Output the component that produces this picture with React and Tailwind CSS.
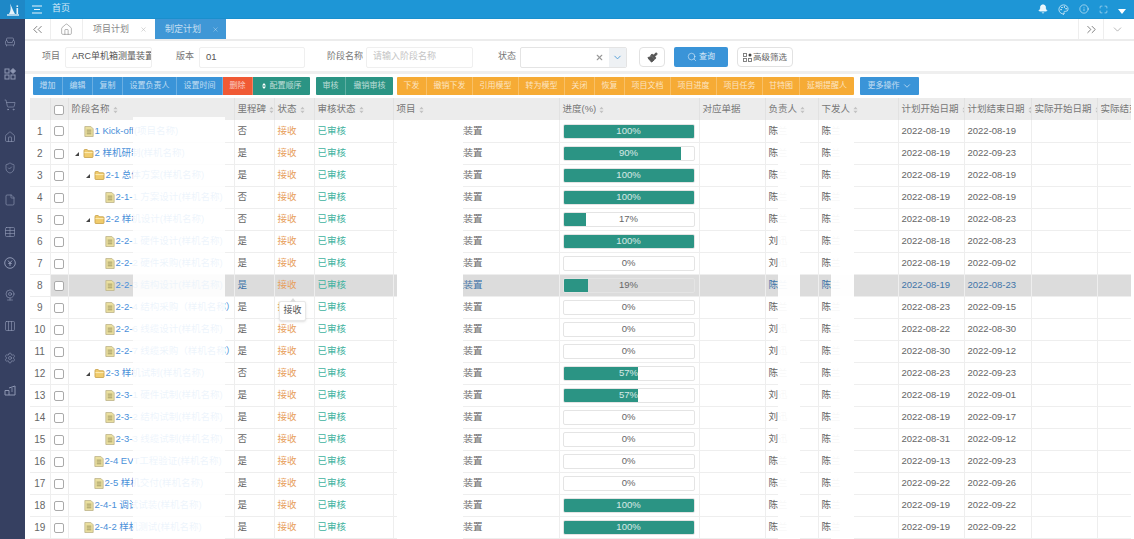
import React from "react";
import { ChevronsLeft, ChevronsRight, ChevronDown, Home, X, Search, Bell, Palette, Info, Maximize, Armchair, ShoppingCart, ShieldCheck, File, Table, Webcam, Columns3, Settings, Paintbrush } from "lucide-react";

const font = "font-['Liberation_Sans','Noto_Sans_CJK_SC',sans-serif]";

const rows = [
  { n: 1, lvl: "file", left: 12, name: "1 Kick-off(项目名称)", ms: "否", p: 100, o: "陈兰", i: "陈兰", s: "2022-08-19", e: "2022-08-19" },
  { n: 2, lvl: "folder", left: 3, name: "2 样机研制(样机名称)", ms: "是", p: 90, o: "陈兰", i: "陈兰", s: "2022-08-19", e: "2022-09-23" },
  { n: 3, lvl: "folder", left: 14, name: "2-1 总体方案(样机名称)", ms: "是", p: 100, o: "陈兰", i: "陈兰", s: "2022-08-19", e: "2022-08-19" },
  { n: 4, lvl: "file", left: 33, name: "2-1-1 方案设计(样机名称)", ms: "否", p: 100, o: "陈兰", i: "陈兰", s: "2022-08-19", e: "2022-08-19" },
  { n: 5, lvl: "folder", left: 14, name: "2-2 样机设计(样机名称)", ms: "否", p: 17, o: "陈兰", i: "陈兰", s: "2022-08-19", e: "2022-08-23" },
  { n: 6, lvl: "file", left: 33, name: "2-2-1 硬件设计(样机名称)", ms: "是", p: 100, o: "刘迅", i: "陈兰", s: "2022-08-18", e: "2022-08-23" },
  { n: 7, lvl: "file", left: 33, name: "2-2-2 硬件采购(样机名称)", ms: "是", p: 0, o: "刘迅", i: "陈兰", s: "2022-08-19", e: "2022-09-02" },
  { n: 8, lvl: "file", left: 33, name: "2-2-3 结构设计(样机名称)", ms: "是", p: 19, o: "陈兰", i: "陈兰", s: "2022-08-19", e: "2022-08-23", hi: true },
  { n: 9, lvl: "file", left: 33, name: "2-2-4 结构采购（样机名称）", ms: "是", p: 0, o: "陈兰", i: "陈兰", s: "2022-08-23", e: "2022-09-15" },
  { n: 10, lvl: "file", left: 33, name: "2-2-6 线缆设计(样机名称)", ms: "是", p: 0, o: "刘迅", i: "陈兰", s: "2022-08-22", e: "2022-08-30" },
  { n: 11, lvl: "file", left: 33, name: "2-2-7 线缆采购（样机名称）", ms: "是", p: 0, o: "刘迅", i: "陈兰", s: "2022-08-30", e: "2022-09-12" },
  { n: 12, lvl: "folder", left: 14, name: "2-3 样机试制(样机名称)", ms: "否", p: 57, o: "陈兰", i: "陈兰", s: "2022-08-23", e: "2022-09-23" },
  { n: 13, lvl: "file", left: 33, name: "2-3-1 硬件试制(样机名称)", ms: "是", p: 57, o: "刘迅", i: "陈兰", s: "2022-08-19", e: "2022-09-01" },
  { n: 14, lvl: "file", left: 33, name: "2-3-2 结构试制(样机名称)", ms: "是", p: 0, o: "刘迅", i: "陈兰", s: "2022-08-19", e: "2022-09-17" },
  { n: 15, lvl: "file", left: 33, name: "2-3-3 线缆试制(样机名称)", ms: "否", p: 0, o: "刘迅", i: "陈兰", s: "2022-08-31", e: "2022-09-12" },
  { n: 16, lvl: "file", left: 22, name: "2-4 EVT工程验证(样机名称)", ms: "是", p: 0, o: "陈兰", i: "陈兰", s: "2022-09-13", e: "2022-09-23" },
  { n: 17, lvl: "file", left: 22, name: "2-5 样机交付(样机名称)", ms: "是", p: 0, o: "陈兰", i: "陈兰", s: "2022-09-22", e: "2022-09-26" },
  { n: 18, lvl: "file", left: 12, name: "2-4-1 调试试装(样机名称)", ms: "是", p: 100, o: "陈兰", i: "陈兰", s: "2022-09-19", e: "2022-09-22" },
  { n: 19, lvl: "file", left: 12, name: "2-4-2 样机测试(样机名称)", ms: "是", p: 100, o: "陈兰", i: "陈兰", s: "2022-09-19", e: "2022-09-22" },
];

function Sort() {
  return (
    <svg width="5" height="8" viewBox="0 0 6 9" className="inline-block ml-[3px] shrink-0">
      <path d="M3 0.5 L5.5 3.6 H0.5 Z M3 8.5 L0.5 5.4 H5.5 Z" fill="#c2c2c2" />
    </svg>
  );
}

function FileIcon() {
  return (
    <svg width="10" height="11" viewBox="0 0 10 12" className="shrink-0">
      <path d="M0.5 0.5H7L9.5 3V11.5H0.5Z" fill="#eadf9f" stroke="#c2b98f" />
      <path d="M2.5 4.5H7.5M2.5 6.5H7.5M2.5 8.5H7.5" stroke="#8c8350" strokeWidth="0.8" />
    </svg>
  );
}

function FolderIcon() {
  return (
    <svg width="11" height="9" viewBox="0 0 11 10" className="shrink-0">
      <path d="M0.5 2V8.5Q0.5 9.5 1.5 9.5H9.5Q10.5 9.5 10.5 8.5V3Q10.5 2 9.5 2H5L4 0.5H1.5Q0.5 0.5 0.5 2Z" fill="#f0cb6c" stroke="#c9a550" />
      <path d="M1 4H10" stroke="#fff2c0" />
    </svg>
  );
}

function Btn({ w, bg, children }) {
  return (
    <div className={`${w} ${bg} h-full flex items-center justify-center text-[8px] text-white/70 border-r border-white/25 last:border-r-0 whitespace-nowrap`}>
      {children}
    </div>
  );
}

function Th({ children, sort = true }) {
  return (
    <th className="border-r border-[#e2e2e2] font-normal text-left px-[3px] pt-px overflow-hidden whitespace-nowrap text-[9.5px] text-[#777]">
      <span className="inline-flex items-center">
        {children}
        {sort && <Sort />}
      </span>
    </th>
  );
}

function Progress({ p, hi }) {
  return (
    <div className={`relative h-[15px] w-[132px] border border-[#e4e4e4] rounded-[2px] overflow-hidden ${hi ? "bg-[#dcdcdc]" : "bg-white"}`}>
      <div className="h-full bg-[#2b9484]" style={{ width: `${p}%` }} />
      <div className={`absolute inset-0 flex items-center justify-center text-[9.5px] ${p >= 50 ? "text-white/80" : "text-[#666]"}`}>{p}%</div>
    </div>
  );
}

export default function App() {
  const td = "border-r border-[#eeeeee] px-[3px] pt-px overflow-hidden whitespace-nowrap";
  const cols = ["w-[20px]", "w-[18px]", "w-[166px]", "w-[40px]", "w-[40px]", "w-[79px]", "w-[166px]", "w-[140px]", "w-[66px]", "w-[53px]", "w-[80px]", "w-[66px]", "w-[67px]", "w-[66px]", "w-[34px]"];
  return (
    <div className={`${font} w-[1134px] h-[539px] overflow-hidden flex bg-white text-[9.5px] text-[#666]`}>
      {/* sidebar */}
      <aside className="w-[25px] shrink-0 bg-[#364061] flex flex-col">
        <div className="w-full h-[19px] bg-[#1e88c7] flex items-center justify-center">
          <svg width="14" height="13" viewBox="0 0 14 13">
            <path d="M4 0.5C5 4 5 8 3 11H9C7 8 6 4 4 0.5Z" fill="#e6f2fb" />
            <path d="M1 12H13" stroke="#e6f2fb" strokeWidth="1.4" />
            <rect x="10.5" y="5" width="1.6" height="6" fill="#e6f2fb" />
            <rect x="10.5" y="2.4" width="1.6" height="1.6" fill="#e6f2fb" />
          </svg>
        </div>
        <div className="flex flex-col items-center w-[19px] gap-[19.6px] mt-[17px] text-[#8e97b3]">
          <Armchair size={12} strokeWidth={1.3} />
          <svg width="12" height="12" viewBox="0 0 12 12" fill="none" stroke="currentColor" strokeWidth="1">
            <rect x="1" y="1" width="4" height="4" /><rect x="1" y="7" width="4" height="4" /><rect x="7" y="7" width="4" height="4" />
            <path d="M9 0.5L11.5 3L9 5.5L6.5 3Z" fill="currentColor" />
          </svg>
          <ShoppingCart size={12} strokeWidth={1.3} />
          <Home size={12} strokeWidth={1.3} />
          <ShieldCheck size={12} strokeWidth={1.3} />
          <File size={12} strokeWidth={1.3} />
          <Table size={12} strokeWidth={1.3} />
          <svg width="12" height="12" viewBox="0 0 12 12" fill="none" stroke="currentColor" strokeWidth="1">
            <circle cx="6" cy="6" r="5.3" />
            <path d="M4 3.5L6 6L8 3.5M6 6V9M4.3 6.5H7.7" />
          </svg>
          <Webcam size={12} strokeWidth={1.3} />
          <Columns3 size={12} strokeWidth={1.3} />
          <Settings size={12} strokeWidth={1.3} />
          <svg width="12" height="12" viewBox="0 0 12 12" fill="none" stroke="currentColor" strokeWidth="1">
            <path d="M1 6.5H5V11H1ZM5 4L11 2V11H5" />
            <path d="M7 5H9M7 7H9" strokeWidth="0.8" />
          </svg>
        </div>
      </aside>

      <main className="flex-1 min-w-0 flex flex-col relative">
        {/* top bar */}
        <header className="h-[19px] shrink-0 bg-[#1e96d6] flex items-center pl-[7px] pr-[8px] text-white border-b border-[#1a8fcd]">
          <svg width="10" height="9" viewBox="0 0 10 9" className="mt-[1px]">
            <path d="M0 1H10M2 4.5H8M0 8H10" stroke="#e8f4fb" strokeWidth="1" />
          </svg>
          <span className="ml-[10px] text-[9px] text-white/80">首页</span>
          <div className="ml-auto flex items-center gap-[10px] text-white/90">
            <Bell size={10} strokeWidth={2} fill="currentColor" />
            <Palette size={11} strokeWidth={1.6} />
            <Info size={10} strokeWidth={1.4} />
            <Maximize size={9} strokeWidth={1.4} />
            <svg width="8" height="5" viewBox="0 0 8 5" className="mt-[4px]"><path d="M0 0H8L4 5Z" fill="#fff" /></svg>
          </div>
        </header>

        {/* tab bar */}
        <nav className="h-[22px] shrink-0 flex items-stretch border-b-2 border-[#ececec] text-[9px]">
          <div className="w-[26px] flex items-center justify-center border-r border-[#eee] text-[#666]"><ChevronsLeft size={15} strokeWidth={1.3} /></div>
          <div className="w-[32px] flex items-center justify-center border-r border-[#eee] text-[#777]"><Home size={13} strokeWidth={1} /></div>
          <div className="w-[72px] flex items-center pl-[10px] pt-px text-[#888]">项目计划<X size={7} className="ml-[11px] text-[#bbb]" /></div>
          <div className="w-[71px] flex items-center pl-[10px] pt-px bg-[#3f97d6] text-white/70">制定计划<X size={7} className="ml-[11px] text-white/50" /></div>
          <div className="ml-auto w-[26px] flex items-center justify-center border-x border-[#eee] text-[#666]"><ChevronsRight size={15} strokeWidth={1.3} /></div>
          <div className="w-[27px] mr-[3px] flex items-center justify-center text-[#888]"><ChevronDown size={13} strokeWidth={1.1} /></div>
        </nav>

        {/* form */}
        <section className="h-[33px] shrink-0 flex items-center pt-[2px] text-[9px] text-[#777] border-b-[3px] border-[#efefef]">
          <span className="ml-[17px] w-[18px] shrink-0">项目</span>
          <div className="ml-[5px] w-[87px] h-[21px] border border-[#efefef] rounded-[2px] pl-[6px] flex items-center text-[9px] text-[#555] overflow-hidden whitespace-nowrap">ARC单机箱测量装置</div>
          <span className="ml-[24px] w-[18px] shrink-0">版本</span>
          <div className="ml-[5px] w-[106px] h-[21px] border border-[#efefef] rounded-[2px] pl-[6px] flex items-center text-[9.5px] text-[#555]">01</div>
          <span className="ml-[22px] w-[36px] shrink-0">阶段名称</span>
          <div className="ml-[3px] w-[107px] h-[21px] border border-[#efefef] rounded-[2px] pl-[6px] flex items-center text-[#c4c4c4]">请输入阶段名称</div>
          <span className="ml-[25px] w-[18px] shrink-0">状态</span>
          <div className="ml-[4px] w-[107px] h-[21px] border border-[#e4e4e4] rounded-[2px] flex items-center justify-end overflow-hidden">
            <X size={9} strokeWidth={3} className="text-[#999] mr-[5px]" />
            <div className="w-[17px] h-full bg-[#eef1f4] flex items-center justify-center text-[#4a9ad6]"><ChevronDown size={11} strokeWidth={2} /></div>
          </div>
          <div className="ml-[12px] w-[26px] h-[20px] border border-[#e2e2e2] rounded-[4px] flex items-center justify-center text-[#555]"><Paintbrush size={11} strokeWidth={2} fill="currentColor" /></div>
          <div className="ml-[9px] w-[54px] h-[20px] bg-[#3a94d8] rounded-[2px] flex items-center justify-center text-white/80 text-[8px]"><Search size={10} strokeWidth={1.5} className="mr-[2px]" />查询</div>
          <div className="ml-[9px] w-[56px] h-[20px] border border-[#e2e2e2] rounded-[4px] flex items-center justify-center text-[#666] text-[8.5px]">
            <svg width="9" height="9" viewBox="0 0 9 9" fill="none" stroke="#777" strokeWidth="0.9" className="mr-[1px] shrink-0">
              <rect x="0.5" y="0.5" width="3" height="3" /><rect x="0.5" y="5.5" width="3" height="3" /><rect x="5.5" y="5.5" width="3" height="3" />
              <circle cx="7" cy="2" r="1.5" fill="#444" stroke="none" />
            </svg>
            高级筛选
          </div>
        </section>

        {/* toolbar */}
        <section className="h-[24px] shrink-0 flex items-start pt-[3px] pl-[8px]">
          <div className="flex h-[18px] rounded-[1px] overflow-hidden">
            <Btn w="w-[30px]" bg="bg-[#3a94d8]">增加</Btn>
            <Btn w="w-[30px]" bg="bg-[#3a94d8]">编辑</Btn>
            <Btn w="w-[30px]" bg="bg-[#3a94d8]">复制</Btn>
            <Btn w="w-[54px]" bg="bg-[#3a94d8]">设置负责人</Btn>
            <Btn w="w-[46px]" bg="bg-[#3a94d8]">设置时间</Btn>
            <Btn w="w-[30px]" bg="bg-[#f05a35]">删除</Btn>
            <Btn w="w-[57px]" bg="bg-[#2b9484]">
              <svg width="4" height="6" viewBox="0 0 4 6" className="mr-[4px]"><path d="M2 0L4 2.4H0ZM2 6L0 3.6H4Z" fill="#fff" /></svg>
              配置顺序
            </Btn>
          </div>
          <div className="flex h-[18px] ml-[6px] rounded-[1px] overflow-hidden">
            <Btn w="w-[30px]" bg="bg-[#2b9484]">审核</Btn>
            <Btn w="w-[47px]" bg="bg-[#2b9484]">撤销审核</Btn>
          </div>
          <div className="flex h-[18px] ml-[4px] rounded-[1px] overflow-hidden">
            <Btn w="w-[30px]" bg="bg-[#f6ab35]">下发</Btn>
            <Btn w="w-[46px]" bg="bg-[#f6ab35]">撤销下发</Btn>
            <Btn w="w-[46px]" bg="bg-[#f6ab35]">引用模型</Btn>
            <Btn w="w-[46px]" bg="bg-[#f6ab35]">转为模型</Btn>
            <Btn w="w-[30px]" bg="bg-[#f6ab35]">关闭</Btn>
            <Btn w="w-[30px]" bg="bg-[#f6ab35]">恢复</Btn>
            <Btn w="w-[46px]" bg="bg-[#f6ab35]">项目文档</Btn>
            <Btn w="w-[46px]" bg="bg-[#f6ab35]">项目进度</Btn>
            <Btn w="w-[46px]" bg="bg-[#f6ab35]">项目任务</Btn>
            <Btn w="w-[37px]" bg="bg-[#f6ab35]">甘特图</Btn>
            <Btn w="w-[54px]" bg="bg-[#f6ab35]">延期提醒人</Btn>
          </div>
          <div className="flex h-[18px] ml-[6px] rounded-[1px] overflow-hidden">
            <Btn w="w-[59px]" bg="bg-[#3a94d8]">更多操作<ChevronDown size={10} className="ml-[2px]" /></Btn>
          </div>
        </section>

        {/* table */}
        <div className="flex-1 min-h-0 overflow-hidden ml-[5px] w-[1101px]">
          <table className="table-fixed border-collapse w-[1101px] text-[9.5px]">
            <colgroup>
              {cols.map((c, i) => (
                <col key={i} className={c} />
              ))}
            </colgroup>
            <thead>
              <tr className="h-[22px] bg-[#ececec]">
                <th className="border-r border-[#e2e2e2]" />
                <th className="border-r border-[#e2e2e2] pt-px">
                  <div className="w-[10px] h-[10px] border border-[#aaa] rounded-[2px] bg-white ml-[3px]" />
                </th>
                <Th>阶段名称</Th><Th>里程碑</Th><Th>状态</Th><Th>审核状态</Th><Th>项目</Th><Th>进度(%)</Th><Th sort={false}>对应单据</Th><Th>负责人</Th><Th>下发人</Th><Th>计划开始日期</Th><Th>计划结束日期</Th><Th>实际开始日期</Th><Th sort={false}>实际结束日期</Th>
              </tr>
            </thead>
            <tbody>
              {rows.map((r) => {
                const bg = r.hi ? "bg-[#dcdcdc]" : "";
                const txt = r.hi ? "text-[#3f74a8]" : "text-[#666]";
                return (
                  <tr key={r.n} className="h-[22px] border-b border-[#eeeeee]">
                    <td className="border-r border-[#eeeeee] pt-px text-center text-[10px] text-[#666]">{r.n}</td>
                    <td className={`border-r border-[#eeeeee] pt-px ${bg}`}>
                      <div className="w-[10px] h-[10px] border border-[#aaa] rounded-[2px] bg-white ml-[3px]" />
                    </td>
                    <td className={`${td} ${bg} text-[#4a90d9]`}>
                      <div className="flex items-center" style={{ paddingLeft: r.left }}>
                        {r.lvl === "folder" ? (
                          <>
                            <svg width="4" height="4" viewBox="0 0 4 4" className="mr-[4px] shrink-0"><path d="M4 0V4H0Z" fill="#444" /></svg>
                            <FolderIcon />
                          </>
                        ) : (
                          <FileIcon />
                        )}
                        <span className="ml-px">{r.name}</span>
                      </div>
                    </td>
                    <td className={`${td} ${bg} ${txt}`}>{r.ms}</td>
                    <td className={`${td} ${bg} text-[#e8a05c]`}>接收</td>
                    <td className={`${td} ${bg} text-[#3fb3a0]`}>已审核</td>
                    <td className={`${td} ${bg} ${txt}`}>
                      <span className="inline-block w-[67px] overflow-hidden align-bottom">ARC单机箱测量</span>装置
                    </td>
                    <td className={`${td} ${bg}`}><Progress p={r.p} hi={r.hi} /></td>
                    <td className={`${td} ${bg}`} />
                    <td className={`${td} ${bg} ${txt}`}>{r.o}</td>
                    <td className={`${td} ${bg} ${txt}`}>{r.i}</td>
                    <td className={`${td} ${bg} ${txt}`}>{r.s}</td>
                    <td className={`${td} ${bg} ${txt}`}>{r.e}</td>
                    <td className={`${td} ${bg}`} />
                    <td className={`${td} ${bg}`} />
                  </tr>
                );
              })}
            </tbody>
          </table>
        </div>

        {/* whited-out patches over the table */}
        <div className="absolute left-[108px] top-[117px] bottom-0 w-[92px] bg-white/90" />
        <div className="absolute left-[372px] top-[120px] bottom-0 w-[66px] bg-white" />
        <div className="absolute left-[753px] top-[120px] bottom-0 w-[22px] bg-white/95" />
        <div className="absolute left-[806px] top-[120px] bottom-0 w-[23px] bg-white/95" />

        {/* tooltip */}
        <div className="absolute left-[254px] top-[301px] w-[27px] h-[20px] bg-white border border-[#e8e8e8] rounded-[2px] shadow-sm flex items-center justify-center text-[9px] text-[#555]">
          <div className="absolute -top-[4px] left-[10px] w-0 h-0 border-x-[3px] border-x-transparent border-b-[4px] border-b-[#ddd]" />
          接收
        </div>
      </main>
    </div>
  );
}
